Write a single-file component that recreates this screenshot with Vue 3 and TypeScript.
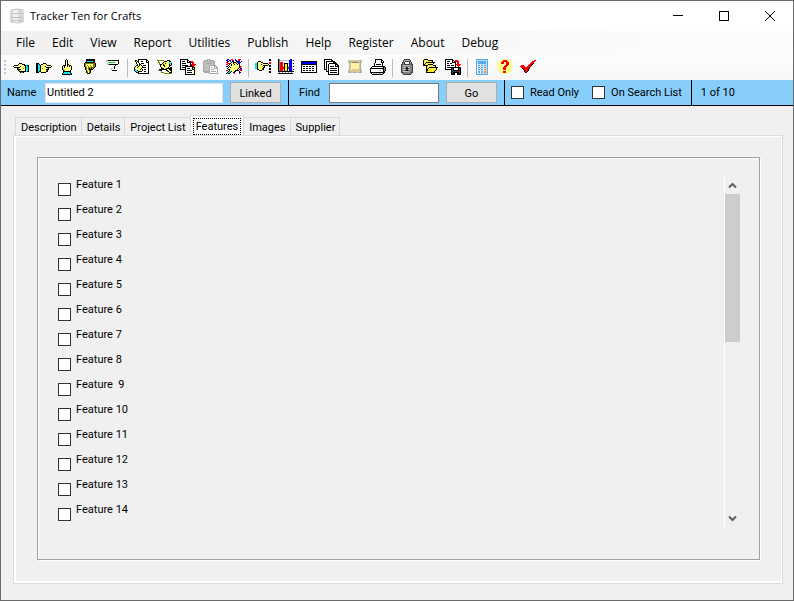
<script setup lang="ts">
import { ref } from 'vue'

interface Run { fill: string; d: string }
interface Tool { label: string; shapes: Run[] }

const palette: Record<string, string> = {
  k: '#000000', w: '#ffffff', y: '#ffff80', Y: '#808000', F: '#fff000',
  c: '#00e5ee', r: '#ff0000', b: '#0000f0', g: '#c0c0c0', G: '#808080',
  D: '#404040', n: '#00d020', s: '#d8c898', p: '#fff3a0', L: '#5aa9e6',
  l: '#bfe0f8', o: '#ff8000', P: '#ffff90', m: '#a8a8a8',
}

/* Each row is one line of a 16x16 icon; equal neighbours become one run. */
function trace(rows: string[]): Run[] {
  const paths: Record<string, string> = {}
  rows.forEach((row, y) => {
    let x = 0
    while (x < row.length) {
      const key = row[x]
      let end = x + 1
      while (row[end] === key) end++
      if (key !== '.') paths[key] = (paths[key] ?? '') + `M${x} ${y}h${end - x}v1h${x - end}z`
      x = end
    }
  })
  return Object.entries(paths).map(([key, d]) => ({ fill: palette[key], d }))
}

const handLeft = [
  '', '', '', '',
  '......kkk.......',
  '.....kyyykkk....',
  '.kkkkyyyyyykkckk',
  'kyyyyyykyyyykcck',
  '.kkkkkkyyyyykcck',
  '....kYyyyyYykcck',
  '....kkkkyyyykcck',
  '.....kYyyyyykcck',
  '......kkkkkkkckk',
  '.......kYYk.....',
]
const handRight = [
  '', '', '', '',
  'kkk....kkk......',
  'kkck.kkyyyk.....',
  'kkcckyyyyyykkkk.',
  'kkcckyyyykyyyyyk',
  'kkcckyyyyykkkkk.',
  'kkcckyYyyyyYk...',
  'kkcckyyyyykkk...',
  'kkcckyyyyyYk....',
  'kkckkyyyyykk....',
  'kkk..kkkkk......',
]
const handUp = [
  '.......k........',
  '......kyk.......',
  '......kyk.......',
  '......kyk.......',
  '......kyk.......',
  '......kykk......',
  '....kkkykykk....',
  '...kykyykykyk...',
  '...kykyyyyyyk...',
  '...kyyyyyyyyk...',
  '...kYyyyyyyyk...',
  '....kYyyyyyk....',
  '....kkkkkkkk....',
  '....kcccccck....',
  '...kcccccccck...',
  '...kkkkkkkkkk...',
]
const handDown = [
  '....kkkkkkkkk...',
  '....kkkkkkkkk...',
  '....kcccccckk...',
  '...kkkkkkkkkk...',
  '..kYYYYYYYYYYk..',
  '..kYyyyyyyyYYk..',
  '..kYyYyyYyyYYk..',
  '..kYyyYyyYyYYk..',
  '...kYyYYYYYYk...',
  '...kYyYkYkYk....',
  '...kYyYkkkk.....',
  '....kyyYk.......',
  '....kYyYk.......',
  '....kYyYk.......',
  '.....kkk........',
]
const signPost = [
  '',
  '.mmkkkkkkkkkkk..',
  '.mwwwwwwwwwwwk..',
  '...nnnnnnnwwwk..',
  '..mwwwwwwwwwwk..',
  '..mmkkkkkkkkk...',
  '.......wwwk.....',
  '.......wwk......',
  '......wwwk......',
  '......mwwk......',
  '......mwwww.....',
  '.......kkkkk....',
]
const writePage = [
  '....kkkkkkkkk...',
  '.kk.kwwwwwwwkk..',
  '.kykkwwkkwwwkwk.',
  '..kykwwwwwwwkkk.',
  '..kyykwkkkwwwwk.',
  '...kykkwwwwwwwk.',
  '..kkykykwkkkwwk.',
  '.kyykyyykwwwwwk.',
  'kyykyyyykkkkwwk.',
  'kyyyyyykwwwwwwk.',
  'kcyyyykykwkkwwk.',
  'kcckyyyykwwwwwk.',
  '.kcckkkkwwkkwwk.',
  '..kkkwwwwwwwwwk.',
  '....kkkkkkkkkkk.',
]
const eraser = [
  '',
  'YYYYYYY...kkk...',
  '.YwwwwwkkkFykk..',
  '.YYwwwkFFyyyccg.',
  '..YwwkFFkyyycck.',
  '..YkkFkFFyyykck.',
  '...kyykkyyyykkG.',
  '...kyyykyyyyk...',
  '....kyyyyyyk.kk.',
  '....kkkyykkkkkk.',
  '..kkkkkkkkyykkk.',
  '.GGkkwwwwkkyykk.',
  '....GwwwwwGkyyk.',
  '....YYYwwwwwkkk.',
  '.......YYYYYYYY.',
]
const copyOut = [
  'kkkkkkkk........',
  'kwwwwwwkk.......',
  'kwkkkwwkwkrrr...',
  'kwwwwwwkkkkrrr..',
  'kwkkkkwwwwk.rr..',
  'kwwwwwwwwwkrrrrr',
  'kwkkkkkkwwkkrrr.',
  'kwwwwkkkkkkkkryy',
  'kwkkkkwwwwwwkkky',
  'kwwwwkwkkkwwkwky',
  'kkkkkkwwwwwwkkky',
  '.....kwkkkkkwwky',
  '.....kwwwwwwwwky',
  '.....kwkkkkkwwky',
  '.....kwwwwwwwwky',
  '.....kkkkkkkkkky',
]
const paste = [
  '....mmm.........',
  '.mmmmwmmmmm.....',
  'mmggmmmmggmm....',
  'mgggggggggmm....',
  'mggmmmmmmggm....',
  'mgggggggggmm....',
  'mgggggmmmmmmm...',
  'mgggggmwwwwmmm..',
  'mgggggmwmmwmwmm.',
  'mgggggmwwwwmmmm.',
  'mgggggmwmmmwwwm.',
  'mgggggmwwwwwwwm.',
  'mmmmmmmwmmmmmwm.',
  '.mmmmmmwwwwwwwm.',
  '......mmmmmmmmm.',
]
const clap = [
  '.bb..rr..b..rrr.',
  'bb.bb.rr.bb.rr..',
  '.bb.b.kk..kbbb.b',
  'rr...kykkkykbbb.',
  '.rrrkyykyykykb..',
  'rr.kykyykyykyk..',
  '..kyykyyyyyyyk..',
  'bb.kyyyyyyyyykrr',
  '..kykyyyyyyyykr.',
  '.kyyyyyyyyyyk.bb',
  '..kkyyyyyyyk.rrb',
  'rr.kyyyyykkkk.rr',
  '..kcckyykk...b..',
  '.kcck..kk....bb.',
  'kckk....r....r..',
]
const pointList = [
  '..............kk',
  '..............kk',
  '...kkk..........',
  '..kyyykk......rr',
  'cckyyyyykkkkk.rr',
  'cckyyykyyyyyyk..',
  'cckyyyyykkkkk.kk',
  'cckyyyyYyk....kk',
  'cckyyyyykk......',
  'cckyyyyYk.....kk',
  '..kkyyykk.....kk',
  '....kkk.........',
  '..............kk',
  '..............kk',
]
const chart = [
  'kG..........bb..',
  'kGgggggggggbbbgk',
  'kG.........bbb..',
  'kGrrr......bbb..',
  'kGrrrgkkkkgbbbgk',
  'kGrrr.kFFk.bbb..',
  'kGrrr.kFFk.bbb..',
  'kGrrrgkFFkgbbbgk',
  'kGrrrrkFFkrbbb..',
  'kGrrrrkFFkrbbb..',
  'kGrrrgkFFkgbbbgk',
  'kGrrr.kFFk.bbb..',
  'kkkkkkkkkkkkkkkk',
  '.G..G..G..G..G..',
  'kkkkkkkkkkkkkkk.',
]
const table = [
  '', '',
  'kkkkkkkkkkkkkkkk',
  'kbbbbbbbbbbbbbbk',
  'kbbbbbbbbbbbbbbk',
  'kkkkkkkkkkkkkkkk',
  'kwwwwwwwwwwwwwwk',
  'kwkkwkkwkkwkkwwk',
  'kwwwwwwwwwwwwwwk',
  'kwkkwkkwkkwkkwwk',
  'kwwwwwwwwwwwwwwk',
  'kwkkwkkwkkwkkwwk',
  'kwwwwwwwwwwwwwwk',
  'kkkkkkkkkkkkkkkk',
]
const pages = [
  'kkkkkkkk........',
  'kwwwwwwkk.......',
  'kwkkkkkkkkk.....',
  'kwkwwwwwwkkk....',
  'kwkwwkkkkkkkk...',
  'kwkwkwwwwwwkkk..',
  'kwkwkwwwwwwkwkk.',
  'kwkwkwkkkkwkkkk.',
  'kwkwkwwwwwwwwwk.',
  'kwkwkwkkkkkkkwk.',
  'kkkwkwwwwwwwwwk.',
  '..kwkwkkkkkkkwk.',
  '..kkkwwwwwwwwwk.',
  '....kwkkkkkkkwk.',
  '....kwwwwwwwwwk.',
  '....kkkkkkkkkkk.',
]
const scroll = [
  '',
  '.mssgssssssgssm.',
  '.smssssssssssms.',
  '.gmsmGGGGGGmsmg.',
  '..msppppppppsm..',
  '..gsppppppppsm..',
  '..msppppppppsm..',
  '..gsppppppppsm..',
  '..msppppppppsm..',
  '..gsppppppppsm..',
  '..gspssssssssm..',
  '.msssssssssssmm.',
  '.smssssssssssms.',
  '.gmmgggmmgggmmg.',
]
const printer = [
  '.....kkkkkkk....',
  '.....kwwwwwkk...',
  '.....kwwwwwkwk..',
  '.....kwwwwwkkk..',
  '....kwwwwwwwk...',
  '....kwkkkkkwk...',
  '....kwwwwwwwk...',
  '..kkkkkkkkkkkkk.',
  '.kgwwwwwwwwwgkGk',
  'kkkkkkkkkkkkkkGk',
  'kwwwwwwwwwwwwkGk',
  'kwwwwwwwwggwwkGk',
  'kwwwwwwwwwwwwkk.',
  'kkkkkkkkkkkkkkk.',
  '.kgggggggggggk..',
  '..kkkkkkkkkkk...',
]
const padlock = [
  '.....DDDDDD.....',
  '....DGggggGD....',
  '....DgDDDDGD....',
  '...DGD....DGD...',
  '...DGD....DGD...',
  '..DDGDDDDDDGDD..',
  '..DGgggggggGGD..',
  '..DGGGGGGGGGGD..',
  '..DGgggDDggGGD..',
  '..DGGGDkkDGGGD..',
  '..DGgggDDggGGD..',
  '..DGGGDkkDGGGD..',
  '..DGggggggGGGD..',
  '..DDGGGGGGGGDD..',
  '...DGGGGGGGGD...',
  '....DDDDDDDD....',
]
const folders = [
  '..kkkk..........',
  '.kFppFkkkkk.....',
  '.kpFpFpFpFk.....',
  '.kFpkkkkkkkkk...',
  '.kpkpFpFpFpk....',
  '.kkFpFkkkkk.....',
  '.kkkkkpFFpFkkk..',
  '....kFpFpFpFpk..',
  '....kpFkkkkkkkkk',
  '....kFkpFFFpFFk.',
  '....kkpFFFpFFFk.',
  '....kkFFFFFFFk..',
  '....kFFpFFpFk...',
  '....kkkkkkkkk...',
]
const saveCopy = [
  'kkkkkkkk........',
  'kwwwwwwkk.rrr...',
  'kwkkkwwkwkrrrr..',
  'kwwwwwwkkkk.rr..',
  'kwkkwkkwwwk.rr..',
  'kwwwwwwwwwkrrrrr',
  'kwkkkwkkkwk.rrr.',
  'kwwwwwwwwwk..r..',
  'kwkkkkkkkkkkkkkk',
  'kwwwwwkDkwwwwkDk',
  'kkkkkkkDkwwwwkDk',
  '......kDkkkkkkDk',
  '......kDDDDDDDDk',
  '......kDkkkkkkDk',
  '......kDkkwwkkDk',
  '......kkkkwwkkkk',
]
const calculator = [
  '..LLLLLLLLLLLL..',
  '..LllllllllllL..',
  '..LlLLLLLLLLlL..',
  '..LlLLLLLLLLlL..',
  '..LlLLLLLLLLlL..',
  '..LllllllllllL..',
  '..LwLLwLLwLLlL..',
  '..LllllllllllL..',
  '..LwLLwLLwoolL..',
  '..LllllllllllL..',
  '..LwLLwLLwoolL..',
  '..LllllllllllL..',
  '..LwLLwLLwoolL..',
  '..LwLLwLLwoolL..',
  '..LllllllllllL..',
  '..LLLLLLLLLLLL..',
]
const question = [
  '....P.PPPPP.P...',
  '...PPPrrrrPPPP..',
  '.PPPPrrrrrrPPPP.',
  '..PPrrrPPrrrPP..',
  'PPPPrrrPPrrrPPPP',
  '.PPPPPPPPrrrPPP.',
  'PPPPPPPPrrrPPPPP',
  '.PPPPPPrrrPPPPP.',
  'PPPPPPrrrPPPPPPP',
  '.PPPPPrrrPPPPPP.',
  '..PPPPrrrPPPPP..',
  '.PPPPPPPPPPPPPP.',
  '..PPPPrrrPPPPP..',
  '...PPPrrrPPPP...',
  '....P.PPPPP.P...',
]
const check = [
  '',
  '..............rr',
  '............rrr.',
  '...........rrr..',
  '..........rrrk..',
  '.........rrrk...',
  '.rrr....rrrk....',
  'rrrrr..rrrk.....',
  '.rrrrrrrrk......',
  '..krrrrrrk......',
  '...krrrrk.......',
  '....krrrk.......',
  '....krrk........',
  '.....kr.........',
]

const tool = (label: string, rows: string[]): Tool => ({ label, shapes: trace(rows) })

const toolGroups: Tool[][] = [
  [tool('Previous', handLeft), tool('Next', handRight), tool('First', handUp), tool('Last', handDown), tool('Go to', signPost)],
  [tool('Edit', writePage), tool('Clear', eraser), tool('Copy', copyOut), tool('Paste', paste), tool('New', clap)],
  [tool('List', pointList), tool('Chart', chart), tool('Table', table), tool('Pages', pages), tool('Scroll', scroll), tool('Print', printer)],
  [tool('Lock', padlock), tool('Open', folders), tool('Save', saveCopy)],
  [tool('Calculator', calculator), tool('Help', question), tool('Check', check)],
]

const menus = ['File', 'Edit', 'View', 'Report', 'Utilities', 'Publish', 'Help', 'Register', 'About', 'Debug']
const tabs = ['Description', 'Details', 'Project List', 'Features', 'Images', 'Supplier']
const activeTab = ref('Features')
const name = ref('Untitled 2')
const find = ref('')
const readOnly = ref(false)
const onSearchList = ref(false)
const features = ref(
  Array.from({ length: 14 }, (_, i) => ({
    id: i + 1,
    label: i === 8 ? 'Feature  9' : `Feature ${i + 1}`,
    checked: false,
  })),
)
</script>

<template>
  <div class="window">
    <header class="titlebar">
      <svg class="app-icon" viewBox="0 0 14 16">
        <path d="M0 2Q7 0 14 2V14Q7 16 0 14Z" fill="#dadada" />
        <path d="M3 2H8V15H3Z" fill="#f0f0f0" />
        <path d="M1 5.500H13M1 9.500H13M1 12.500H13" fill="none" stroke="#c2c2c2" />
        <path d="M1 2Q7 0 13 2M1 14Q7 16 13 14" fill="none" stroke="#c8c8c8" />
      </svg>
      <h1>Tracker Ten for Crafts</h1>
      <div class="window-buttons">
        <button type="button" aria-label="Minimize">
          <svg viewBox="0 0 12 12"><path d="M1 5.500H11" /></svg>
        </button>
        <button type="button" aria-label="Maximize">
          <svg viewBox="0 0 12 12"><path d="M1.500 1.500H10.500V10.500H1.500Z" /></svg>
        </button>
        <button type="button" aria-label="Close">
          <svg class="smooth" viewBox="0 0 12 12"><path d="M1 1L11 11M11 1L1 11" /></svg>
        </button>
      </div>
    </header>

    <nav class="menubar">
      <button v-for="menu in menus" :key="menu" type="button">{{ menu }}</button>
    </nav>

    <div class="toolbar" role="toolbar">
      <span class="grip"><i></i><i></i><i></i><i></i></span>
      <div v-for="(group, g) in toolGroups" :key="g" class="tool-group">
        <button v-for="item in group" :key="item.label" type="button" :aria-label="item.label">
          <svg viewBox="0 0 16 16" shape-rendering="crispEdges">
            <path v-for="shape in item.shapes" :key="shape.fill" :fill="shape.fill" :d="shape.d" />
          </svg>
        </button>
      </div>
    </div>

    <form class="record" @submit.prevent>
      <div class="record-part name-part">
        <label for="name">Name</label>
        <input id="name" v-model="name" class="text name-input" type="text" />
        <button type="button">Linked</button>
      </div>
      <div class="record-part find-part">
        <label for="find">Find</label>
        <input id="find" v-model="find" class="text find-input" type="text" />
        <button type="submit">Go</button>
      </div>
      <div class="record-part flag-part">
        <label><input v-model="readOnly" class="tick" type="checkbox" />Read Only</label>
        <label><input v-model="onSearchList" class="tick" type="checkbox" />On Search List</label>
      </div>
      <output class="position">1 of 10</output>
    </form>

    <main>
      <div class="tabs" role="tablist">
        <button
          v-for="tab in tabs"
          :key="tab"
          type="button"
          role="tab"
          :aria-selected="tab === activeTab"
          :class="{ active: tab === activeTab }"
          @click="activeTab = tab"
        >
          <span>{{ tab }}</span>
        </button>
      </div>
      <section class="panel" role="tabpanel">
        <div class="group">
          <ul>
            <li v-for="feature in features" :key="feature.id">
              <input :id="`feature-${feature.id}`" v-model="feature.checked" class="tick" type="checkbox" />
              <label :for="`feature-${feature.id}`">{{ feature.label }}</label>
            </li>
          </ul>
          <div class="scrollbar">
            <button type="button" aria-label="Scroll up">
              <svg viewBox="0 0 9 7"><path d="M1 5.500L4.500 2L8 5.500" /></svg>
            </button>
            <div class="track"><div class="thumb"></div></div>
            <button type="button" aria-label="Scroll down">
              <svg viewBox="0 0 9 7"><path d="M1 1.500L4.500 5L8 1.500" /></svg>
            </button>
          </div>
        </div>
      </section>
    </main>
  </div>
</template>

<style>
body {
  margin: 0;
}
</style>

<style scoped>
* {
  box-sizing: border-box;
}
.window {
  display: flex;
  flex-direction: column;
  min-height: 100vh;
  border: 1px solid #6b6b6b;
  background: #f0f0f0;
  color: #000;
  font: 11px/14px Roboto, "Liberation Sans", sans-serif;
}
button {
  padding: 0;
  border: 0;
  background: none;
  color: inherit;
  font: inherit;
}
.titlebar {
  display: flex;
  align-items: center;
  height: 30px;
  padding-left: 9px;
  background: #fff;
}
.app-icon {
  width: 14px;
  height: 16px;
}
h1 {
  flex: 1;
  margin: 0 0 0 6px;
  font: 400 11px/16px "Open Sans", sans-serif;
}
.window-buttons {
  display: flex;
}
.window-buttons button {
  display: flex;
  align-items: center;
  justify-content: center;
  width: 46px;
  height: 30px;
}
.window-buttons svg {
  width: 12px;
  height: 12px;
  fill: none;
  stroke: #000;
  shape-rendering: crispEdges;
}
.window-buttons .smooth {
  shape-rendering: auto;
}
.menubar {
  display: flex;
  gap: 17px;
  height: 24px;
  padding-left: 15px;
  background: linear-gradient(90deg, #f0f0f0, #fbfbfb 80%);
  font: 12px/24px "Open Sans", sans-serif;
}
.toolbar {
  display: flex;
  height: 25px;
  background: linear-gradient(#fdfdfd, #f6f6f6);
}
.grip {
  display: flex;
  flex-direction: column;
  gap: 2px;
  width: 8px;
  padding: 5px 3px;
}
.grip i {
  width: 2px;
  height: 2px;
  background: #c4c4c4;
}
.tool-group {
  display: flex;
}
.tool-group + .tool-group {
  margin-left: 3px;
  padding-left: 2px;
  border-left: 1px solid #c9c9c9;
  border-image: linear-gradient(transparent 20%, #bdbdbd 20%, #bdbdbd 84%, transparent 84%) 1;
}
.tool-group button {
  display: flex;
  align-items: center;
  justify-content: center;
  width: 23px;
  height: 24px;
}
.tool-group svg {
  width: 16px;
  height: 16px;
}
.record {
  display: flex;
  height: 26px;
  border-bottom: 1px solid #000;
  background: #87cefa;
}
.record-part {
  display: flex;
  align-items: center;
}
.text {
  height: 20px;
  padding: 0 1px;
  border: 1px solid #7a7a7a;
  background: #fff;
  color: #000;
  font: inherit;
  outline: none;
}
.name-part {
  padding-left: 6px;
}
.name-part label {
  width: 38px;
}
.name-input {
  width: 178px;
  margin-right: 7px;
  border-color: #e3e3e3;
}
.find-input {
  width: 110px;
  margin-right: 7px;
}
.record-part button {
  width: 51px;
  height: 21px;
  padding-top: 2px;
  border: 1px solid #adadad;
  background: #e1e1e1;
}
.find-part {
  margin-left: 7px;
  padding-left: 10px;
  border-left: 1px solid #000;
}
.find-part label {
  width: 30px;
}
.flag-part {
  gap: 13px;
  margin-left: 7px;
  padding: 0 9px 0 6px;
  border-left: 1px solid #000;
  border-right: 1px solid #000;
}
.flag-part label {
  display: flex;
  align-items: center;
  gap: 6px;
}
.position {
  padding-left: 9px;
  line-height: 26px;
}
.tick {
  appearance: none;
  flex: none;
  width: 13px;
  height: 13px;
  margin: 0;
  border: 1px solid #333;
  background: #fff;
}
.tick:checked {
  background: #333;
  box-shadow: inset 0 0 0 2px #fff;
}
main {
  display: flex;
  flex: 1;
  flex-direction: column;
  padding: 9px 10px 16px 12px;
}
.tabs {
  display: flex;
  align-items: flex-end;
  padding-left: 2px;
}
.tabs button {
  height: 18px;
  margin-right: -1px;
  padding: 1px 4px 0 5px;
  border: 1px solid #d9d9d9;
  border-bottom: 0;
  line-height: 18px;
}
.tabs .active {
  height: 20px;
  padding: 1px 2px 0;
  background: #fff;
}
.active span {
  display: block;
  padding: 0 2px;
  border: 1px dotted #000;
  line-height: 15px;
}
.panel {
  display: flex;
  flex: 1;
  padding: 21px 22px 23px 23px;
  border: 1px solid #dcdcdc;
  box-shadow: inset 2px 1px #fff, inset -1px -2px #fff;
}
.group {
  display: flex;
  flex: 1;
  align-items: flex-start;
  padding: 18px 19px 32px 20px;
  border: 1px solid #a0a0a0;
  box-shadow: inset 1px 1px #fff, 1px 1px #fff;
}
ul {
  flex: 1;
  margin: 0;
  padding: 0;
  list-style: none;
}
li {
  display: flex;
  align-items: flex-start;
  gap: 5px;
  height: 25px;
  white-space: pre;
}
li .tick {
  margin-top: 7px;
}
li label {
  padding-top: 2px;
}
.scrollbar {
  display: flex;
  flex-direction: column;
  align-self: stretch;
  width: 16px;
  border-left: 1px solid #fff;
}
.scrollbar button {
  display: flex;
  align-items: center;
  justify-content: center;
  height: 18px;
}
.scrollbar svg {
  width: 9px;
  height: 7px;
  fill: none;
  stroke: #606060;
  stroke-width: 2;
}
.track {
  flex: 1;
}
.thumb {
  height: 47%;
  background: #cdcdcd;
}
</style>
